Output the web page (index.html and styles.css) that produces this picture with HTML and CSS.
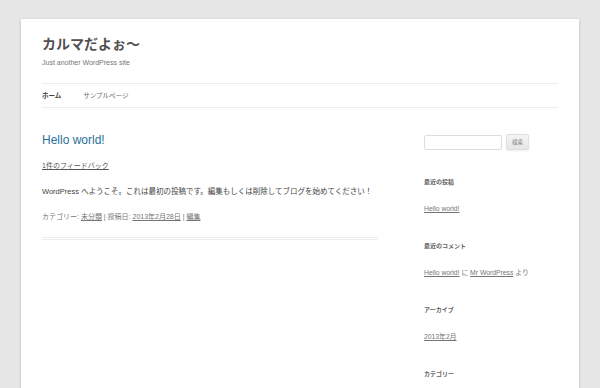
FILE: index.html
```html
<!DOCTYPE html>
<html lang="ja">
<head>
    <meta charset="utf-8">
    <title>カルマだよぉ〜 | Just another WordPress site</title>
    <link rel="stylesheet" href="styles.css">
</head>
<body>
    <div class="site">
        <header class="site-header">
            <h1 class="site-title">カルマだよぉ〜</h1>
            <h2 class="site-description">Just another WordPress site</h2>
            <nav class="main-navigation">
                <a href="#" class="current">ホーム</a>
                <a href="#">サンプルページ</a>
            </nav>
        </header>

        <div class="site-main">
            <div class="site-content">
                <article class="post">
                    <h1 class="entry-title"><a href="#">Hello world!</a></h1>
                    <div class="comments-link"><a href="#">1件のフィードバック</a></div>
                    <div class="entry-content">
                        <p>WordPress へようこそ。これは最初の投稿です。編集もしくは削除してブログを始めてください！</p>
                    </div>
                    <footer class="entry-meta">
                        カテゴリー: <a href="#">未分類</a> | 投稿日: <a href="#">2013年2月28日</a> | <a href="#">編集</a>
                    </footer>
                </article>
            </div>

            <div class="sidebar">
                <form class="search-form">
                    <input type="text" class="search-field">
                    <button type="button" class="search-submit">検索</button>
                </form>

                <div class="widget">
                    <h3 class="widget-title">最近の投稿</h3>
                    <p><a href="#">Hello world!</a></p>
                </div>

                <div class="widget">
                    <h3 class="widget-title">最近のコメント</h3>
                    <p><a href="#">Hello world!</a> に <a href="#">Mr WordPress</a> より</p>
                </div>

                <div class="widget">
                    <h3 class="widget-title">アーカイブ</h3>
                    <p><a href="#">2013年2月</a></p>
                </div>

                <div class="widget">
                    <h3 class="widget-title">カテゴリー</h3>
                </div>
            </div>
        </div>
    </div>
</body>
</html>
```

FILE: styles.css
```css
body {
    margin: 0;
    padding: 19px 0 0 21px;
    height: 369px;
    background-color: #e6e6e6;
    font-family: "Liberation Sans", "Noto Sans CJK JP", sans-serif;
    color: #444;
    overflow: hidden;
}

a {
    color: inherit;
}

.site {
    width: 516px;
    height: 354px;
    padding: 15px 21px 0;
    background-color: #fff;
    box-shadow: 0 1px 3px rgba(100, 100, 100, 0.3);
}

/* Header */
.site-title {
    margin: 0;
    font-size: 14px;
    line-height: 20px;
    font-weight: bold;
    color: #515151;
}

.site-description {
    margin: 4px 0 0;
    font-size: 7px;
    line-height: 10px;
    font-weight: normal;
    color: #757575;
}

.main-navigation {
    display: flex;
    gap: 22px;
    margin-top: 15px;
    border-top: 1px solid #ededed;
    border-bottom: 1px solid #ededed;
    line-height: 23px;
    font-size: 6.5px;
}

.main-navigation a {
    color: #6a6a6a;
    text-decoration: none;
}

.main-navigation a.current {
    color: #444;
    font-weight: bold;
}

/* Main */
.site-main {
    display: flex;
    justify-content: space-between;
}

.site-content {
    width: 336px;
    padding-top: 23px;
}

.post {
    padding-bottom: 15px;
    border-bottom: 3px double #ededed;
}

.entry-title {
    margin: 0;
    font-size: 12px;
    line-height: 18px;
    font-weight: normal;
}

.entry-title a {
    color: #2a7199;
    text-decoration: none;
}

.comments-link {
    margin-top: 12px;
    font-size: 7px;
    line-height: 10px;
    color: #555;
}

.entry-content p {
    margin: 15px 0 0;
    font-size: 7.5px;
    line-height: 12px;
    color: #444;
}

.entry-meta {
    margin-top: 14px;
    font-size: 7px;
    line-height: 10px;
    color: #757575;
}

/* Sidebar */
.sidebar {
    width: 134px;
    padding-top: 26px;
}

.search-form {
    display: flex;
    align-items: center;
    gap: 4px;
}

.search-field {
    box-sizing: border-box;
    width: 78px;
    height: 15px;
    margin: 0;
    padding: 0 3px;
    border: 1px solid #ddd;
    border-radius: 2px;
}

.search-submit {
    box-sizing: border-box;
    width: 23px;
    height: 16px;
    margin: 0;
    padding: 0;
    font-family: inherit;
    font-size: 5.5px;
    color: #7c7c7c;
    background-color: #e6e6e6;
    background-image: linear-gradient(to bottom, #f4f4f4, #e6e6e6);
    border: 1px solid #e0e0e0;
    border-radius: 2px;
    box-shadow: 0 1px 2px rgba(64, 64, 64, 0.1);
}

.widget {
    margin-top: 27px;
}

.widget-title {
    margin: 0;
    font-size: 6px;
    line-height: 10px;
    font-weight: bold;
    color: #636363;
}

.widget p {
    margin: 17px 0 0;
    font-size: 6.8px;
    line-height: 10px;
    color: #757575;
}
```
